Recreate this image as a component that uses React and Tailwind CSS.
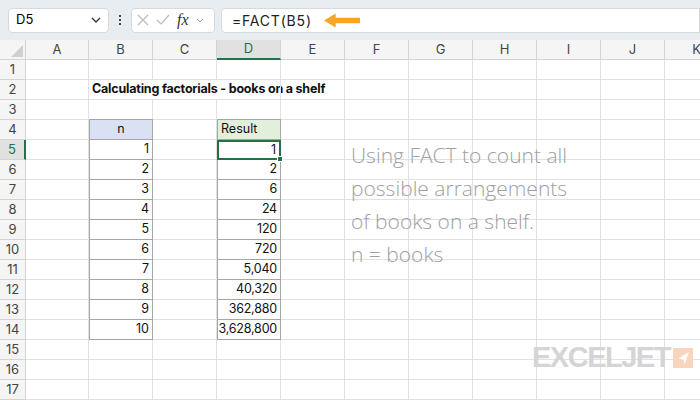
import React from "react";

const cols = [["A",63],["B",64],["C",64],["D",64],["E",64],["F",64],["G",64],["H",64],["I",64],["J",64],["K",64]];
const vals = ["1","2","6","24","120","720","5,040","40,320","362,880","3,628,800"];

export default function App() {
  const rows = [];
  for (let r = 1; r <= 17; r++) {
    const sel = r === 5;
    rows.push(
      <div key={r} className="flex h-[20px]">
        <div className={`w-[26px] shrink-0 flex items-center justify-center text-[13px] border-b border-r border-[#d4d4d4] ${sel ? "bg-[#e1e1e1] text-[#217346] border-r-2 border-r-[#217346]" : "bg-[#f5f5f5] text-[#444]"}`}>{r}</div>
        {cols.map(([c, w]) => {
          let cls = "border-b border-r border-[#e1e1e1]";
          let content = null;
          const idx = r - 5;
          if (c === "B" && r === 2) { content = <span className="font-bold whitespace-nowrap text-[12.5px] pl-[3px] tracking-[-0.2px]">Calculating factorials - books on a shelf</span>; cls = "border-b border-[#e1e1e1]"; }
          if (c === "C" && r === 2) cls = "border-b border-[#e1e1e1]";
          if (c === "B" && r === 4) { cls = "border border-[#a6a6a6] bg-[#d9e1f2] -mt-px"; content = <span className="w-full text-center">n</span>; }
          if (c === "B" && r >= 5 && r <= 14) { cls = "border-b border-x border-[#a6a6a6]"; content = <span className="w-full text-right pr-[3px]">{r - 4}</span>; }
          if (c === "D" && r === 4) { cls = "border border-[#a6a6a6] bg-[#e2efda] -mt-px"; content = <span className="pl-[3px]">Result</span>; }
          if (c === "D" && r >= 5 && r <= 14) { cls = sel ? "border-2 border-[#217346] relative" : "border-b border-x border-[#a6a6a6]"; content = <span className="w-full text-right pr-[3px] tracking-[-0.2px]">{vals[idx]}</span>; }
          return (
            <div key={c} style={{ width: w }} className={`shrink-0 flex items-center text-[12.5px] text-[#111] overflow-visible ${cls}`}>
              {content}
              {c === "D" && sel && <div className="absolute -right-[4px] -bottom-[4px] w-[6px] h-[6px] bg-[#217346] border border-white" />}
            </div>
          );
        })}
      </div>
    );
  }
  return (
    <div className="w-[700px] h-[400px] overflow-hidden bg-white relative" style={{ fontFamily: "Inter, 'Noto Sans', sans-serif" }}>
      <div className="h-[40px] bg-[#e8edf1] flex items-center px-[8px] gap-[6px]">
        <div className="w-[101px] h-[25px] bg-white rounded border border-[#d6dadd] flex items-center justify-between px-[7px] text-[13px]">
          <span>D5</span>
          <svg width="10" height="6" viewBox="0 0 10 6"><path d="M1 1l4 4 4-4" stroke="#333" strokeWidth="1.3" fill="none"/></svg>
        </div>
        <div className="flex flex-col gap-[2px] mx-[4px]">
          {[0,1,2].map(i => <div key={i} className="w-[2px] h-[2px] bg-[#444]" />)}
        </div>
        <div className="w-[84px] h-[25px] bg-white rounded border border-[#d6dadd] flex items-center gap-[7px] px-[5px]">
          <svg width="12" height="12" viewBox="0 0 12 12"><path d="M1 1l10 10M11 1L1 11" stroke="#bbb" strokeWidth="1.2"/></svg>
          <svg width="14" height="12" viewBox="0 0 14 12"><path d="M1 6l4 4 8-9" stroke="#bbb" strokeWidth="1.2" fill="none"/></svg>
          <span className="italic text-[16px] text-[#333]" style={{ fontFamily: "'Liberation Serif', serif" }}>fx</span>
          <svg width="8" height="5" viewBox="0 0 8 5"><path d="M1 1l3 3 3-3" stroke="#999" strokeWidth="1" fill="none"/></svg>
        </div>
        <div className="flex-1 h-[25px] bg-white rounded-l border border-[#d6dadd] flex items-center px-[10px] gap-[12px] -mr-[8px]">
          <span className="text-[14px] text-[#222] tracking-[0.8px]">=FACT(B5)</span>
          <svg width="36" height="15" viewBox="0 0 34 14"><path d="M0 7L11 0.5V4.5H34V9.5H11V13.5Z" fill="#f5a623"/></svg>
        </div>
      </div>
      <div className="flex h-[20px] bg-[#f5f5f5]">
        <div className="w-[26px] shrink-0 border-r border-b border-[#d4d4d4] relative">
          <svg className="absolute right-[2px] bottom-[2px]" width="12" height="12" viewBox="0 0 12 12"><path d="M12 0V12H0Z" fill="#d0d0d0"/></svg>
        </div>
        {cols.map(([c, w]) => (
          <div key={c} style={{ width: w }} className={`shrink-0 flex items-center justify-center text-[13px] border-r border-[#d4d4d4] ${c === "D" ? "bg-[#e1e1e1] text-[#217346] border-b-2 border-b-[#217346]" : "text-[#444] border-b"}`}>{c}</div>
        ))}
      </div>
      {rows}
      <div className="absolute left-[351px] top-[139px] text-[21px] leading-[33px] font-light text-[#a0a0a0]" style={{ fontFamily: "'Open Sans', sans-serif" }}>
        <div>Using FACT to count all</div>
        <div>possible arrangements</div>
        <div>of books on a shelf.</div>
        <div>n = books</div>
      </div>
      <div className="absolute left-[532px] top-[343px] flex items-center gap-[3px]">
        <span className="text-[29px] font-black text-[#d5d5d5] tracking-[-1.5px] leading-none" style={{ fontFamily: "'Liberation Sans', sans-serif" }}>EXCELJET</span>
        <svg width="20" height="20" viewBox="0 0 19 19"><rect width="19" height="19" fill="#f9d5bd"/><path d="M15 4L5 10l5 1 1 5z" fill="white"/></svg>
      </div>
    </div>
  );
}
